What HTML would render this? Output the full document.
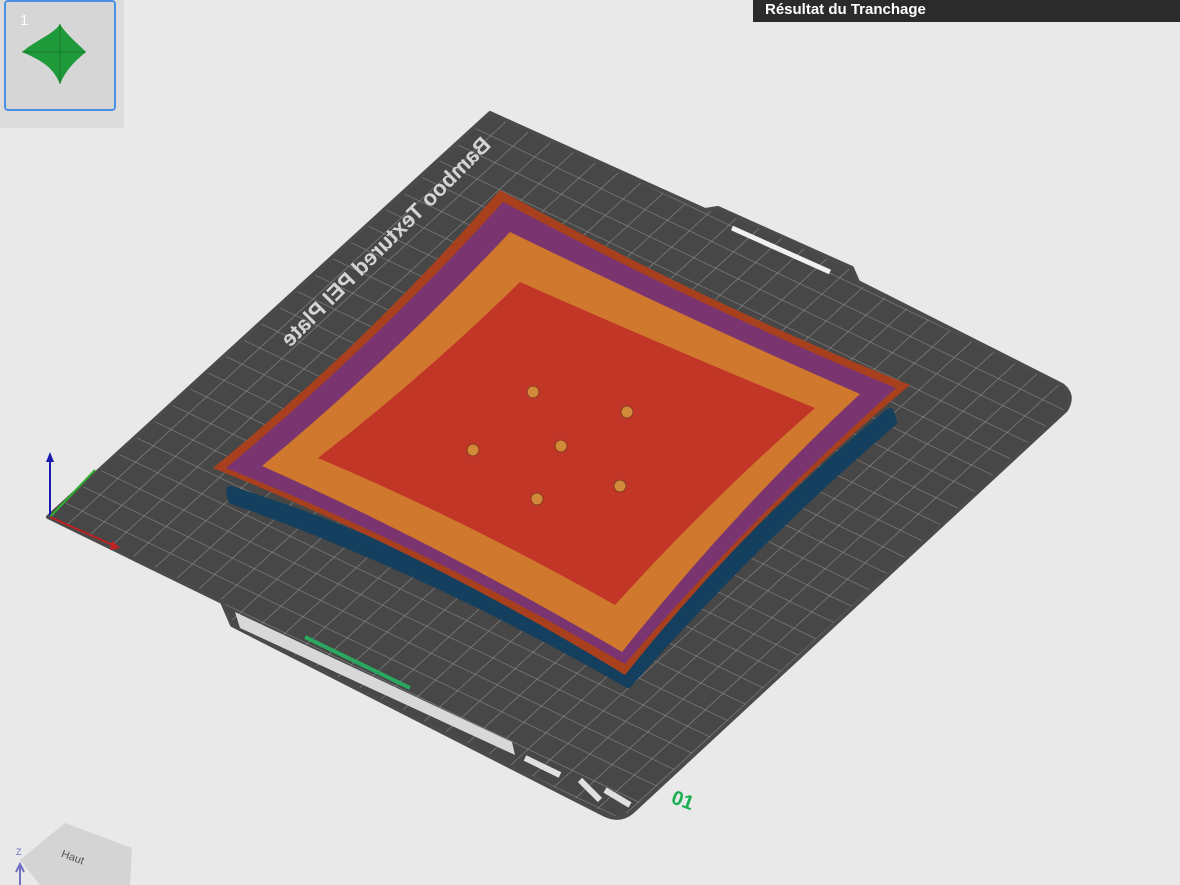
<!DOCTYPE html>
<html><head><meta charset="utf-8"><style>
html,body{margin:0;padding:0;width:1180px;height:885px;overflow:hidden;background:#e9e9e9;font-family:"Liberation Sans",sans-serif}
.bar{position:absolute;left:753px;top:0;width:427px;height:22px;background:#2b2b2b;color:#fff;font-weight:bold;font-size:15px;line-height:20px;padding-left:12px;box-sizing:border-box}
.thumbwrap{position:absolute;left:0;top:0;width:124px;height:128px;background:#dcdcdc}
.thumb{position:absolute;left:4px;top:0;width:108px;height:107px;border:2px solid #4a90e2;border-radius:4px;background:#d6d6d6}
</style></head><body>
<div class="thumbwrap"><div class="thumb"><span style="position:absolute;left:14px;top:10px;color:#fff;font-size:15px">1</span>
<svg width="108" height="107" style="position:absolute;left:0;top:0"><path d="M54 22 C60 32 68 38 80 50 C68 60 60 68 54 82 C48 68 40 60 16 50 C30 38 48 32 54 22Z" fill="#1e9a3a"/><path d="M54 22 L54 82 M16 50 L80 50" stroke="#147a2a" stroke-width="1"/></svg></div></div>
<div class="bar">Résultat du Tranchage</div>
<svg width="1180" height="885" style="position:absolute;left:0;top:0">
<defs>
<pattern id="g" width="24" height="24" patternUnits="userSpaceOnUse" patternTransform="matrix(0.92,0.44,-0.74,0.68,0,0)">
<rect width="24" height="24" fill="#474747"/><path d="M0 0H24M0 0V24" stroke="#8a8a8a" stroke-width="1.3"/></pattern>
</defs>
<path d="M490 113 L705 210 L718 208 L852 268 L858 282 L1062 385 Q1075 395 1066 410 L632 812 Q620 822 605 815 L232 625 L222 602 L48 517 Z" fill="url(#g)" stroke="#4a4a4a" stroke-width="4" stroke-linejoin="round"/>
<path d="M732 228 L830 272" stroke="#f0f0f0" stroke-width="5"/>
<text transform="translate(492,146) rotate(135) scale(1,-1)" fill="#d4d4d4" font-size="22" font-weight="bold">Bamboo Textured PEI Plate</text>
<path d="M235 612 L512 742 L515 755 L240 628Z" fill="#d8d8d8"/>
<path d="M305 637 L410 688" stroke="#2aa860" stroke-width="4"/>
<path d="M525 758 L560 775 M580 780 L600 800 M605 790 L630 805" stroke="#e0e0e0" stroke-width="6"/>
<text x="672" y="808" fill="#18b050" font-size="20" font-weight="bold" transform="rotate(20 686 800)">01</text>
<path d="M230 490 Q440 555 625 680 Q745 530 890 412 L893 422 Q755 540 628 684 Q430 570 232 500Z" fill="#143f5e" stroke="#143f5e" stroke-width="8" stroke-linejoin="round"/>
<path d="M500 190 Q698 300 910 385 Q750 518 625 675 Q430 555 213 468 Q370 340 500 190Z" fill="#a8401e"/>
<path d="M503 202 Q698 306 896 388 Q750 518 625 664 Q430 550 226 468 Q375 344 503 202Z" fill="#7a3470"/>
<path d="M510 232 Q695 322 860 394 Q735 510 622 652 Q440 545 262 466 Q390 360 510 232Z" fill="#d0782e"/>
<path d="M520 282 Q685 355 815 408 Q710 500 615 605 Q465 520 318 458 Q425 375 520 282Z" fill="#c23628"/>
<g fill="#d08a3a" stroke="#8a3a20" stroke-width="1">
<circle cx="533" cy="392" r="6"/><circle cx="627" cy="412" r="6"/><circle cx="561" cy="446" r="6"/><circle cx="473" cy="450" r="6"/><circle cx="620" cy="486" r="6"/><circle cx="537" cy="499" r="6"/></g>
<path d="M50 517 V458" stroke="#1a1ab0" stroke-width="2"/><path d="M46 462 L50 452 L54 462Z" fill="#1a1ab0"/>
<path d="M50 517 L95 470" stroke="#30b030" stroke-width="2"/>
<path d="M50 517 L115 546" stroke="#c02020" stroke-width="2"/><path d="M112 541 L120 548 L110 550Z" fill="#c02020"/>
<path d="M20 860 L65 823 L132 848 L130 885 L40 885Z" fill="#d4d4d4"/>
<text x="60" y="860" font-size="11" fill="#555" transform="rotate(20 70 860)">Haut</text>
<text x="16" y="855" font-size="9" fill="#7070c0">Z</text>
<path d="M20 885 V866 M16 872 L20 864 L24 872" stroke="#7070c0" stroke-width="2" fill="none"/>
</svg>
</body></html>
